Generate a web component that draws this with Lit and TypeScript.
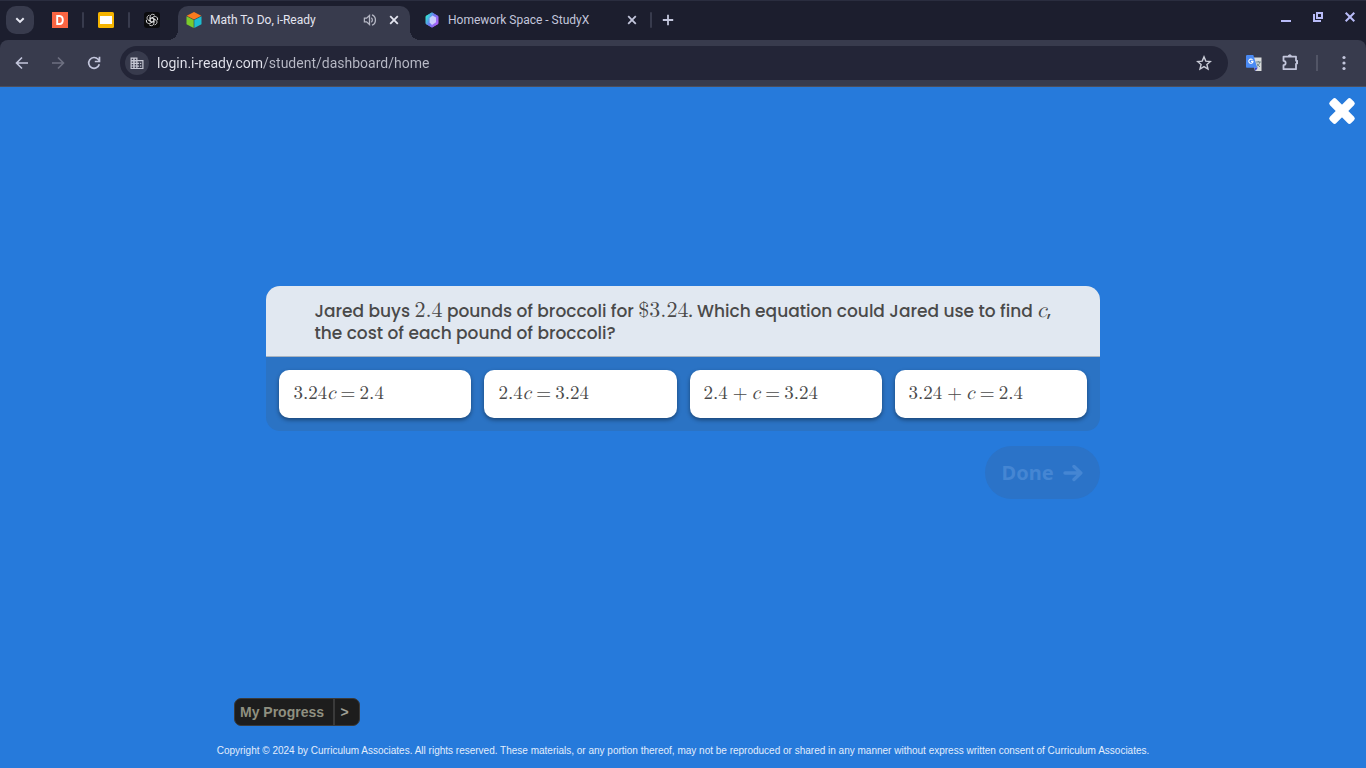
import { LitElement, html, css, svg } from "lit";
import { customElement, property } from "lit/decorators.js";

const crossIcon = () => html`
  <svg width="16" height="16" viewBox="0 0 16 16" fill="none" stroke="currentColor" stroke-width="1.800" aria-hidden="true">
    <path d="M4.200 4.200l7.600 7.600M11.800 4.200l-7.600 7.600" />
  </svg>`;

@customElement("browser-tabs")
class BrowserTabs extends LitElement {
  static styles = css`
    :host { display: block; background: #1c1e2e; box-shadow: inset 0 1px #2a2d3f; color: #c3c6dc; }
    .strip { display: flex; align-items: center; height: 40px; padding: 0 8px 0 6px; }
    button { display: flex; align-items: center; justify-content: center; padding: 0; border: 0; background: none; color: inherit; font: inherit; }
    .search { width: 28px; height: 28px; border-radius: 10px; background: #383b4d; color: #e6e7f2; margin-right: 10px; }
    .pinned { width: 32px; height: 28px; }
    .divider { width: 2px; height: 16px; background: #383b4d; border-radius: 1px; margin: 0 6px; }
    .tab { position: relative; display: flex; align-items: center; align-self: flex-end; box-sizing: border-box; height: 34px; padding: 0 8px 6px; font: 12px/16px Roboto, sans-serif; }
    .tab .title { flex: 1; text-align: left; margin-left: 8px; white-space: nowrap; font: inherit; justify-content: flex-start; }
    .active { width: 232px; background: #383b4d; border-radius: 10px 10px 0 0; color: #e4e5f0; margin-left: 10px; }
    .active::before, .active::after { content: ""; position: absolute; bottom: 0; width: 10px; height: 10px; }
    .active::before { left: -10px; background: radial-gradient(circle at 0 0, #1c1e2e 10px, #383b4d 10px); }
    .active::after { right: -10px; background: radial-gradient(circle at 100% 0, #1c1e2e 10px, #383b4d 10px); }
    .other { width: 234px; padding: 0 4px 6px 14px; }
    .close { width: 16px; height: 16px; }
    .audio { margin-right: 8px; color: #b5b7c4; }
    .add { width: 20px; height: 20px; }
    .windows { display: flex; margin-left: auto; gap: 16px; color: #b9bcf8; margin-bottom: 6px; }
    .windows button { width: 16px; height: 16px; }
  `;

  render() {
    return html`
      <div class="strip">
        <button class="search" aria-label="Search tabs">
          <svg width="12" height="12" viewBox="0 0 12 12" fill="none" stroke="currentColor" stroke-width="2"><path d="M2.3 4.2L6 7.9l3.7-3.7" /></svg>
        </button>
        <button class="pinned" aria-label="D">
          <svg width="16" height="16" viewBox="0 0 16 16"><rect width="16" height="16" fill="#fb6542" /><path d="M5.2 4v8h2.3c2.3 0 3.3-1.7 3.3-4s-1-4-3.3-4z" fill="none" stroke="#fff" stroke-width="1.9" /></svg>
        </button>
        <span class="divider"></span>
        <button class="pinned" aria-label="Slides">
          <svg width="16" height="16" viewBox="0 0 16 16"><rect width="16" height="16" rx="1.5" fill="#f5b400" /><rect x="2" y="4" width="12" height="8" fill="#fff" /></svg>
        </button>
        <span class="divider"></span>
        <button class="pinned" aria-label="Chat">
          <svg width="16" height="16" viewBox="0 0 16 16"><rect width="16" height="16" rx="3" fill="#0b0b0d" />
            <g fill="none" stroke="#e2e2e2" stroke-width=".85">
              ${[0, 60, 120, 180, 240, 300].map((a) => svg`<path transform="rotate(${a} 8 8)" d="M6.1 9V5.2C6.1 3.4 7.2 2.3 8.7 2.3c1 0 1.7.4 2.2 1.1M6.1 6.9L9.5 4.9" />`)}
            </g>
          </svg>
        </button>
        <div class="tab active">
          <svg width="16" height="16" viewBox="0 0 16 16">
            <path d="M8 0l7.3 3.7L8 7.6.7 3.7z" fill="#fa7a1e" /><path d="M.5 4.3L7.7 8v8L.5 12.2z" fill="#7acb2c" /><path d="M15.5 4.3L8.3 8v8l7.2-3.8z" fill="#1dbdd0" />
          </svg>
          <button class="title">Math To Do, i-Ready</button>
          <button class="close audio" aria-label="Mute tab">
            <svg width="14" height="14" viewBox="0 0 14 14" fill="none" stroke="currentColor" stroke-width="1.3"><path d="M1.4 5.2h2.200l2.900-2.700v9L3.6 8.800H1.4zM8.300 4.800c1.400 1 1.400 3.400 0 4.400M9 1.800c4.600 1.600 4.600 8.800 0 10.400" /></svg>
          </button>
          <button class="close" aria-label="Close tab">${crossIcon()}</button>
        </div>
        <div class="tab other">
          <svg width="16" height="16" viewBox="0 0 16 16">
            <defs><linearGradient id="gem" x1="0" y1="0.2" x2="1" y2="0.8"><stop offset="0" stop-color="#2eeed0" /><stop offset=".45" stop-color="#6a7bf2" /><stop offset="1" stop-color="#b65cf6" /></linearGradient></defs>
            <path d="M8 .8l6 3.500v7.400L8 15.200l-6-3.500V4.300z" fill="url(#gem)" stroke="url(#gem)" stroke-linejoin="round" />
            <path d="M8.500 3.400l3.500 2v4.900L8 13 5.600 10.600V6z" fill="#dfe2ff" opacity=".8" />
          </svg>
          <button class="title">Homework Space - StudyX</button>
          <button class="close" aria-label="Close tab">${crossIcon()}</button>
        </div>
        <span class="divider"></span>
        <button class="add" aria-label="New tab">
          <svg width="12" height="12" viewBox="0 0 12 12" stroke="currentColor" stroke-width="1.800"><path d="M6 .8v10.400M.8 6h10.400" /></svg>
        </button>
        <div class="windows">
          <button aria-label="Minimize"><svg width="16" height="16" viewBox="0 0 16 16"><path d="M3 11h10v2H3z" fill="currentColor" /></svg></button>
          <button aria-label="Restore"><svg width="16" height="16" viewBox="0 0 16 16" fill="none" stroke="currentColor" stroke-width="2"><path d="M7 4h5v5H7zM4 5v7h7" /></svg></button>
          <button aria-label="Close window"><svg width="16" height="16" viewBox="0 0 16 16" stroke="currentColor" stroke-width="2"><path d="M3.700 3.700l8.600 8.600M12.300 3.700l-8.600 8.600" /></svg></button>
        </div>
      </div>`;
  }
}

@customElement("browser-toolbar")
class BrowserToolbar extends LitElement {
  static styles = css`
    :host { display: block; background: #1c1e2e; color: #c3c6dc; }
    .bar { display: flex; align-items: center; height: 46px; padding: 0 14px; border-bottom: 1px solid #4d4e5b; border-radius: 8px 8px 0 0; background: #383b4d; }
    button { display: flex; flex: none; align-items: center; justify-content: center; padding: 0; border: 0; background: none; color: inherit; }
    .nav { display: flex; gap: 20px; }
    .nav button, .tools button { width: 16px; height: 16px; }
    .tools .extensions { width: 18px; height: 18px; }
    .nav button:disabled { color: #6e7081; }
    .address { display: flex; flex: 1; align-items: center; height: 34px; margin: 0 18px; padding: 0 16px 0 5px; border-radius: 17px; background: #232537; }
    .site { width: 24px; height: 24px; border-radius: 12px; background: #383b4d; color: #c6c8d4; }
    .url { flex: 1; min-width: 0; margin: 0 8px; padding: 0; border: 0; outline: 0; font: 14px/20px Roboto, sans-serif; color: transparent;
      background: linear-gradient(90deg, #e4e5ee 107px, #b9bbc7 107px); background-clip: text; -webkit-background-clip: text; }
    .star { color: #c9cbd6; }
    .tools { display: flex; align-items: center; gap: 18px; }
    .divider { width: 2px; height: 16px; background: #525566; }
  `;

  render() {
    return html`
      <div class="bar">
        <div class="nav">
          <button aria-label="Back"><svg width="16" height="16" viewBox="0 0 16 16" fill="none" stroke="currentColor" stroke-width="1.600"><path d="M14 8H3M8 2.500L2.500 8 8 13.500" /></svg></button>
          <button aria-label="Forward" disabled><svg width="16" height="16" viewBox="0 0 16 16" fill="none" stroke="currentColor" stroke-width="1.600"><path d="M2 8h11M8 2.500L13.500 8 8 13.500" /></svg></button>
          <button aria-label="Reload"><svg width="16" height="16" viewBox="0 0 16 16" fill="none" stroke="currentColor" stroke-width="1.700"><path d="M13.300 9.300A5.400 5.400 0 1 1 12.100 4.300L13.600 6M13.500 1.800v4.700H8.800" /></svg></button>
        </div>
        <div class="address">
          <button class="site" aria-label="Site information">
            <svg width="14" height="14" viewBox="0 0 14 14"><path fill="currentColor" fill-rule="evenodd" d="M.5 1.500h7v2.600h6v8.900h-13zM1.700 2.700v1.400h1.500V2.700zm3 0v1.400h1.500V2.700zm-3 2.700v1.400h1.500V5.400zm3 0v1.400h1.500V5.400zm-3 2.600v1.400h1.500V8zm3 0v1.400h1.500V8zm-3 2.600V12h1.500v-1.400zm3 0V12h1.500v-1.400zM7.500 5.300v1.500h1.600v1.300H7.500v1.300h1.600v1.300H7.500V12h4.800V5.300zM10 6.800h1.300v1.300H10zm0 2.600h1.300v1.300H10z" /></svg>
          </button>
          <input class="url" type="text" aria-label="Address" spellcheck="false" value="login.i-ready.com/student/dashboard/home" />
          <button class="star" aria-label="Bookmark this page"><svg width="16" height="16" viewBox="0 0 16 16" fill="none" stroke="currentColor" stroke-width="1.400"><path d="M8 1.900l1.800 4.200 4.600.4-3.500 3 1.100 4.500L8 11.600 4 14l1.100-4.500-3.500-3 4.600-.4z" /></svg></button>
        </div>
        <div class="tools">
          <button aria-label="Translate">
            <svg width="16" height="16" viewBox="0 0 16 16"><path d="M6 2.500h9.500V16H9z" fill="#d9dcdc" /><path d="M8.500 12.500h3.300L9.500 16z" fill="#3a3fd0" /><path d="M.8 0h6.500l4 12.700H.8A.8.8 0 0 1 0 12V.8z" fill="#4a8af4" /><path d="M6.500 4.800a2.100 2.100 0 1 0 .5 1.600H5" fill="none" stroke="#fff" stroke-width="1.100" /><path d="M9.800 7h5M12.300 6v1M13.800 7c-.5 2.200-1.800 3.700-3 4.500M11 8.500c.6 1.400 1.700 2.600 3 3.300" fill="none" stroke="#6b8388" /></svg>
          </button>
          <button class="extensions" aria-label="Extensions"><svg width="18" height="18" viewBox="-2 1 18 18" fill="none" stroke="currentColor" stroke-width="1.800" stroke-linejoin="round"><path d="M1.500 3.700h12.500v4a1.500 1.500 0 0 1 0 3.200v5.300H1.500v-4.100a2.100 2.100 0 0 0 0-4.300z" /><path d="M6.200 3.400a1.600 1.600 0 0 1 3.200 0zM14.500 7.700a1.600 1.600 0 0 1 0 3.200z" fill="currentColor" stroke-width="1" /></svg></button>
          <span class="divider"></span>
          <button aria-label="Menu"><svg width="16" height="16" viewBox="0 0 16 16" fill="currentColor"><circle cx="8" cy="2.500" r="1.600" /><circle cx="8" cy="8" r="1.600" /><circle cx="8" cy="13.500" r="1.600" /></svg></button>
        </div>
      </div>`;
  }
}

@customElement("math-text")
class MathText extends LitElement {
  @property() expr = "";

  static styles = css`
    :host { font-family: "Latin Modern Math", "Liberation Serif", serif; font-weight: 400; white-space: nowrap; }
    .op { display: inline-block; width: 14px; margin: 0 5px; text-align: center; }
    .var { font-style: italic; }
  `;

  render() {
    return (this.expr.match(/[\d.$]+|[a-z]|[+=]/g) ?? []).map((t) =>
      /[a-z]/.test(t) ? html`<span class="var">${t}</span>` : /[+=]/.test(t) ? html`<span class="op">${t}</span>` : html`<span>${t}</span>`);
  }
}

const choices = ["3.24c=2.4", "2.4c=3.24", "2.4+c=3.24", "3.24+c=2.4"];

@customElement("lesson-page")
class LessonPage extends LitElement {
  static styles = css`
    :host { position: relative; display: flex; flex: 1; flex-direction: column; background: #267adb; color: #4a4a4a; }
    button { border: 0; padding: 0; font: inherit; color: inherit; }
    .exit { position: absolute; top: 10px; right: 10px; width: 28px; height: 28px; background: none; color: #fff; }
    .exit svg { display: block; }
    main { display: flex; flex: 1; flex-direction: column; align-items: flex-end; justify-content: center; width: 61%; margin: 0 auto; }
    .card { width: 100%; border-radius: 14px; overflow: hidden; background: #2b73c4; }
    .question { margin: 0; padding: 14px 40px 12px 48px; border-bottom: 1px solid #a9b4c0; background: #e1e8f1; font: 500 17px/22px Poppins, Inter, sans-serif; }
    .question math-text { font-size: 22px; line-height: 20px; }
    .choices { display: grid; grid-template-columns: repeat(4, 1fr); gap: 13px; padding: 13px; }
    .choice { height: 48px; padding: 0 14px 2px; border-radius: 10px; background: #fff; box-shadow: 0 2px 4px rgba(0, 0, 0, .4); text-align: left; font-size: 19px; }
    .done { display: flex; align-items: center; justify-content: center; gap: 9px; width: 115px; height: 53px; margin-top: 15px; border-radius: 27px; background: #2b73c8; color: #4586d3; font: 700 20px/28px "Noto Sans", "Open Sans", sans-serif; }
    footer { padding: 0 0 11px; }
    .progress { display: flex; align-items: stretch; box-sizing: border-box; width: 126px; height: 28px; margin-left: 234px; border: 1px solid #3a3a3a; border-radius: 7px; background: #1d1d1d; color: #8f9080; font: 700 14px/26px "Liberation Sans", sans-serif; }
    .progress .label { flex: 1; text-align: left; padding-left: 5px; white-space: nowrap; }
    .progress .more { width: 19px; padding-right: 5px; border-left: 2px solid #3a3a3a; text-align: center; color: #a0a096; }
    .legal { margin: 19px 0 0; text-align: center; color: #e2edfb; font: 10px/12px "Liberation Sans", sans-serif; }
  `;

  render() {
    return html`
      <button class="exit" aria-label="Close lesson">
        <svg width="28" height="28" viewBox="0 0 28 28" fill="currentColor"><rect x="-1" y="9.500" width="30" height="9" rx="2.500" transform="rotate(45 14 14)" /><rect x="-1" y="9.500" width="30" height="9" rx="2.500" transform="rotate(-45 14 14)" /></svg>
      </button>
      <main>
        <section class="card">
          <p class="question">Jared buys <math-text expr="2.4"></math-text> pounds of broccoli for <math-text expr="$3.24"></math-text>. Which equation could Jared use to find <math-text expr="c"></math-text>, the cost of each pound of broccoli?</p>
          <div class="choices">${choices.map((c) => html`<button class="choice"><math-text expr=${c}></math-text></button>`)}</div>
        </section>
        <button class="done" disabled>Done
          <svg width="20" height="18" viewBox="0 0 20 18" fill="none" stroke="currentColor" stroke-width="3.400" stroke-linecap="round" stroke-linejoin="round"><path d="M2 9h15.500M11 2.500L17.800 9 11 15.500" /></svg>
        </button>
      </main>
      <footer>
        <button class="progress"><span class="label">My Progress</span><span class="more">&gt;</span></button>
        <p class="legal">Copyright © 2024 by Curriculum Associates. All rights reserved. These materials, or any portion thereof, may not be reproduced or shared in any manner without express written consent of Curriculum Associates.</p>
      </footer>`;
  }
}

@customElement("app-root")
class AppRoot extends LitElement {
  static styles = css`
    :host { display: flex; flex-direction: column; min-height: 100vh; }
  `;

  render() {
    return html`<browser-tabs></browser-tabs><browser-toolbar></browser-toolbar><lesson-page></lesson-page>`;
  }
}
